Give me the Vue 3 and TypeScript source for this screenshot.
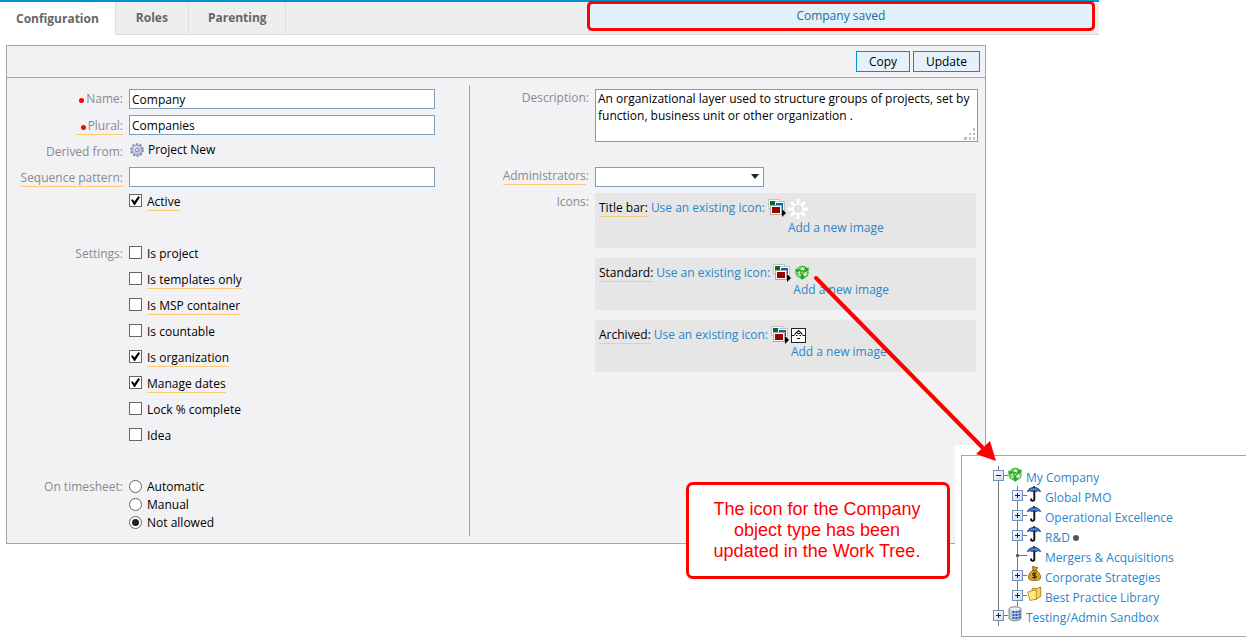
<script setup lang="ts">
import { ref } from 'vue'

interface Setting {
  id: string
  label: string
  hint: boolean
  checked: boolean
}

interface IconRow {
  id: 'title' | 'standard' | 'archived'
  label: string
}

interface TreeNode {
  label: string
  icon: 'company' | 'umbrella' | 'money' | 'folder' | 'database'
  level: 0 | 1
  toggle: 'plus' | 'minus' | 'leaf'
  marker?: boolean
}

const tabs = ['Configuration', 'Roles', 'Parenting']
const activeTab = ref('Configuration')

const name = ref('Company')
const plural = ref('Companies')
const sequence = ref('')
const active = ref(true)
const description = ref(
  'An organizational layer used to structure groups of projects, set by function, business unit or other organization .'
)
const administrator = ref('')

const settings = ref<Setting[]>([
  { id: 'project', label: 'Is project', hint: false, checked: false },
  { id: 'templates', label: 'Is templates only', hint: true, checked: false },
  { id: 'msp', label: 'Is MSP container', hint: true, checked: false },
  { id: 'countable', label: 'Is countable', hint: false, checked: false },
  { id: 'organization', label: 'Is organization', hint: true, checked: true },
  { id: 'dates', label: 'Manage dates', hint: true, checked: true },
  { id: 'lock', label: 'Lock % complete', hint: false, checked: false },
  { id: 'idea', label: 'Idea', hint: false, checked: false }
])

const timesheetModes = ['Automatic', 'Manual', 'Not allowed']
const timesheet = ref('Not allowed')

const iconRows: IconRow[] = [
  { id: 'title', label: 'Title bar:' },
  { id: 'standard', label: 'Standard:' },
  { id: 'archived', label: 'Archived:' }
]

const tree: TreeNode[] = [
  { label: 'My Company', icon: 'company', level: 0, toggle: 'minus' },
  { label: 'Global PMO', icon: 'umbrella', level: 1, toggle: 'plus' },
  { label: 'Operational Excellence', icon: 'umbrella', level: 1, toggle: 'plus' },
  { label: 'R&D', icon: 'umbrella', level: 1, toggle: 'plus', marker: true },
  { label: 'Mergers & Acquisitions', icon: 'umbrella', level: 1, toggle: 'leaf' },
  { label: 'Corporate Strategies', icon: 'money', level: 1, toggle: 'plus' },
  { label: 'Best Practice Library', icon: 'folder', level: 1, toggle: 'plus' },
  { label: 'Testing/Admin Sandbox', icon: 'database', level: 0, toggle: 'plus' }
]
</script>

<template>
  <div class="page">
    <header class="tabbar">
      <nav class="tabs">
        <button
          v-for="tab in tabs"
          :key="tab"
          type="button"
          class="tab"
          :class="{ current: tab === activeTab }"
          @click="activeTab = tab"
        >{{ tab }}</button>
      </nav>
      <div class="status" role="status">Company saved</div>
    </header>

    <main class="panel">
      <div class="toolbar">
        <button type="button" class="action">Copy</button>
        <button type="button" class="action wide">Update</button>
      </div>

      <form class="columns" @submit.prevent>
        <section class="left">
          <div class="row">
            <label class="caption" for="name"><i class="dot"></i>Name:</label>
            <input id="name" v-model="name" class="text" type="text" />
          </div>
          <div class="row">
            <label class="caption low" for="plural"><span class="hint"><i class="dot"></i>Plural:</span></label>
            <input id="plural" v-model="plural" class="text" type="text" />
          </div>
          <div class="row">
            <span class="caption low">Derived from:</span>
            <span class="derived">
              <svg width="14" height="14" viewBox="0 0 14 14">
                <circle cx="7" cy="7" r="5.8" fill="none" stroke="#7f7fab" stroke-width="2" stroke-dasharray="2 1.64" />
                <circle cx="7" cy="7" r="5.2" fill="#c0c0e0" stroke="#8d8db8" stroke-width="0.8" />
                <circle cx="6" cy="5.6" r="2.8" fill="#d6d6ee" />
                <circle cx="7" cy="7" r="1.6" fill="#f2f2f8" stroke="#8585b4" stroke-width="1" />
              </svg>
              Project New
            </span>
          </div>
          <div class="row">
            <label class="caption low" for="sequence"><span class="hint">Sequence pattern:</span></label>
            <input id="sequence" v-model="sequence" class="text" type="text" />
          </div>
          <div class="row check">
            <span class="caption"></span>
            <input id="active" v-model="active" class="box" type="checkbox" />
            <label for="active"><span class="hint">Active</span></label>
          </div>

          <div class="group settings">
            <div v-for="(item, index) in settings" :key="item.id" class="row check">
              <span class="caption">{{ index === 0 ? 'Settings:' : '' }}</span>
              <input :id="item.id" v-model="item.checked" class="box" type="checkbox" />
              <label :for="item.id"><span :class="{ hint: item.hint }">{{ item.label }}</span></label>
            </div>
          </div>

          <div class="group modes">
            <div v-for="(mode, index) in timesheetModes" :key="mode" class="row short">
              <span class="caption">{{ index === 0 ? 'On timesheet:' : '' }}</span>
              <input :id="'mode-' + index" v-model="timesheet" class="radio" type="radio" name="timesheet" :value="mode" />
              <label :for="'mode-' + index">{{ mode }}</label>
            </div>
          </div>
        </section>

        <section class="right">
          <div class="field">
            <label class="caption" for="description">Description:</label>
            <div class="area">
              <textarea id="description" v-model="description"></textarea>
              <svg class="grip" width="12" height="12" viewBox="0 0 12 12" fill="#c0c0c0">
                <path d="M9 0h2v3h-2zM9 5h2v2h-2zM5 5h2v2h-2zM9 9h2v3h-2zM5 9h2v3h-2zM0 9h3v3h-3z" />
              </svg>
            </div>
          </div>
          <div class="field admins">
            <label class="caption" for="admins"><span class="hint">Administrators</span>:</label>
            <div class="picklist">
              <select id="admins" v-model="administrator">
                <option value=""></option>
              </select>
            </div>
          </div>
          <div class="field">
            <span class="caption">Icons:</span>
            <div class="cards">
              <div v-for="row in iconRows" :key="row.id" class="card">
                <span class="cardname"><span class="hint">{{ row.label }}</span></span>
                <a href="#" class="use">Use an existing icon:</a>
                <svg class="picker" width="18" height="19" viewBox="0 0 18 19">
                  <path d="M0 0h12v10h-12z" fill="#c2c2c2" />
                  <path d="M1 1h10v8h-10z" fill="#fff" />
                  <path d="M2 2h8v6h-8z" fill="#006a35" />
                  <path d="M7 2h10v10h-10z" fill="#c2c2c2" />
                  <path d="M7 3h9v8h-9z" fill="#fff" />
                  <path d="M8 4h7v6h-7z" fill="#0067a6" />
                  <path d="M2 6h12v10h-12z" fill="#aaa" />
                  <path d="M3 7h10v8h-10z" fill="#fff" />
                  <path d="M4 8h8v6h-8z" fill="#9b0000" />
                  <path d="M14 10l4 4l-4 4z" fill="#000" />
                </svg>
                <div class="chosen">
                  <svg v-if="row.id === 'title'" width="20" height="20" viewBox="0 0 20 20">
                    <g stroke="#fff" stroke-width="2.800">
                      <path d="M10 0v5M10 15v5M0 10h5M15 10h5M3 3l3.500 3.500M13.500 13.500l3.500 3.500M17 3l-3.500 3.500M6.500 13.500l-3.500 3.500" />
                    </g>
                    <circle cx="10" cy="10" r="4.300" fill="#e6e6e6" stroke="#fff" stroke-width="2" />
                    <circle cx="10" cy="10" r="3.500" fill="none" stroke="#ccc" stroke-width="0.8" />
                  </svg>
                  <svg v-else-if="row.id === 'standard'" class="small" width="14" height="15" viewBox="0 0 14 15">
                    <path d="M0.300 4l2-0.500c2-3.500 7.500-3.500 9.500-0.500l2-0.500l-0.500 3.500c1 3-0.500 6-3.500 7l-2.800 1.700l-2-1.700c-3.500-0.500-5-4-4.500-6.500z" fill="#27a52c" />
                    <path d="M2.500 4.500c2-3 6-3 7.500-0.500M12 6c0.500 3-1 5-3 5.500M5.500 12c-2.500-0.500-4-2.500-3.500-5" fill="none" stroke="#7be04f" stroke-width="1.600" />
                    <path d="M3.500 8.500l1.500-2M5.800 5l1.700-1.800l1.500 2.200M10 7l1 2.500h-2.800M6 9.800h-2.500" fill="none" stroke="#fff" stroke-width="1.300" />
                    <path d="M5.500 8.500l2-2.500l1.500 2.500z" fill="#8fe070" />
                  </svg>
                  <svg v-else class="boxed" width="15" height="15" viewBox="0 0 15 15">
                    <rect x="0.5" y="0.5" width="14" height="14" fill="#fff" stroke="#222" />
                    <path d="M1 7.500h2.500M11.500 7.500h2.500M3.500 6.500l4-4l4 4M6 5.500h3M5 7.500h1.500M8.500 7.500h1.500M6 10.500h3" fill="none" stroke="#111" stroke-width="1.100" />
                  </svg>
                  <a href="#">Add a new image</a>
                </div>
              </div>
            </div>
          </div>
        </section>
      </form>
    </main>

    <aside class="treewrap">
      <ul class="tree">
        <li v-for="node in tree" :key="node.label" class="node" :class="{ child: node.level === 1 }">
          <span v-if="node.toggle === 'leaf'" class="leaf"></span>
          <button v-else type="button" class="toggle" :class="node.toggle" :aria-label="'Toggle ' + node.label"></button>
          <svg class="glyph" width="15" height="16" viewBox="0 0 15 16">
            <g v-if="node.icon === 'company'">
              <path d="M0.300 5l2-0.500c2-3.500 7.500-3.500 9.500-0.500l2-0.500l-0.500 3.500c1 3-0.500 6-3.500 7l-2.800 1.700l-2-1.700c-3.500-0.500-5-4-4.500-6.500z" fill="#27a52c" />
              <path d="M2.500 5.500c2-3 6-3 7.500-0.500M12 7c0.500 3-1 5-3 5.500M5.500 13c-2.500-0.500-4-2.500-3.500-5" fill="none" stroke="#7be04f" stroke-width="1.600" />
              <path d="M3.500 9.500l1.500-2M5.800 6l1.700-1.800l1.500 2.200M10 8l1 2.500h-2.800M6 10.800h-2.500" fill="none" stroke="#fff" stroke-width="1.300" />
              <path d="M5.500 9.500l2-2.500l1.500 2.500z" fill="#8fe070" />
            </g>
            <g v-else-if="node.icon === 'umbrella'">
              <path d="M0.500 5.500c1-2.500 3-4 6.500-4s5.500 1.500 6.500 4l-2.200-0.800l-2.200 0.800l-2.100-0.800l-2.100 0.800l-2.200-0.800z" fill="#4b83dc" stroke="#182b57" stroke-width="0.9" />
              <path d="M7 0v1.500" stroke="#111" stroke-width="1.500" />
              <path d="M7.300 5v8.200c0 2-3.300 2-3.300 0v-0.700" fill="none" stroke="#111" stroke-width="1.900" />
            </g>
            <g v-else-if="node.icon === 'money'">
              <path d="M5.500 0.500l5 1l-1.500 3c3 1.500 4.500 4 4.500 6.500c0 2.500-1.500 3.500-6 3.500s-6-1-6-3.500c0-3 2-5.500 4.500-6.500z" fill="#d9a521" stroke="#85600e" stroke-width="0.9" />
              <path d="M5.500 4.500l4 0.300" stroke="#76520b" stroke-width="1.200" />
              <path d="M9.500 7.500c-1.500-0.900-4-0.700-3.800 0.900s3.600 0.800 3.600 2.300s-2.500 1.600-4 0.600M7.500 6.500v6.300" fill="none" stroke="#302204" stroke-width="1.100" />
            </g>
            <g v-else-if="node.icon === 'folder'">
              <path d="M5 2.500l3-0.500l1 1l4.500-2l0.500 9l-5 3.500l-4-2z" fill="#f2cf55" stroke="#aa7d13" stroke-width="0.9" />
              <path d="M0.800 6l5.500-1.500l3-0.500v9l-6.300 1.500z" fill="#ffe988" stroke="#b88b1d" stroke-width="0.9" />
            </g>
            <g v-else>
              <path d="M1 3c0-3 12-3 12 0v9.500c-1.500 3-10.500 3-12 0z" fill="#c9ccd1" stroke="#777b82" stroke-width="0.9" />
              <ellipse cx="7" cy="3" rx="5.200" ry="1.500" fill="#eceef0" />
              <path d="M5.500 5v9M8.500 5v9M11.500 4.500v8.500" stroke="#1f5fc4" stroke-width="2" stroke-dasharray="2 1" />
            </g>
          </svg>
          <a href="#">{{ node.label }}</a>
          <i v-if="node.marker" class="marker"></i>
        </li>
      </ul>
    </aside>

    <p class="callout">The icon for the Company object type has been updated in the Work Tree.</p>

    <svg class="arrow" width="184" height="188" viewBox="0 0 184 188">
      <path d="M3 4l166 169" stroke="#f00" stroke-width="4" stroke-linecap="round" />
      <path d="M183 187l-20-7l14-13z" fill="#f00" />
    </svg>
  </div>
</template>

<style>
body {
  margin: 0;
  background: #fff;
}
</style>

<style scoped>
.page {
  position: relative;
  min-height: 100vh;
  overflow: hidden;
  font: 12px/18px "Open Sans", "Noto Sans", sans-serif;
  color: #000;
}

.page * {
  box-sizing: border-box;
}

button,
input,
select,
textarea {
  margin: 0;
  font: inherit;
  color: inherit;
}

a {
  color: #2a86cb;
  text-decoration: none;
}

svg {
  display: block;
  flex: none;
}

/* Tabs and status */
.tabbar {
  display: flex;
  height: 35px;
  margin-right: 147px;
  border-top: 2px solid #0090d0;
  background: #eee;
  box-shadow: inset 0 -1px #dedede;
}

.tabs {
  display: flex;
}

.tab {
  height: 31px;
  padding: 0 20px;
  border: 0;
  border-right: 1px solid #dedede;
  background: none;
  font-weight: 700;
  color: #666;
}

.tab:last-child {
  padding: 0 18px 0 19px;
}

.tab.current {
  height: 33px;
  padding: 0 16px;
  background: #fff;
}

.status {
  flex: 1;
  height: 30px;
  margin: -1px 4px 0 301px;
  border: 3px solid #f00;
  border-radius: 5px;
  background: #e2f0f9;
  color: #1a6fa3;
  line-height: 24px;
  text-align: center;
}

/* Panel */
.panel {
  margin: 10px 260px 0 6px;
  border: 1px solid #a3a5a8;
  background: #f2f2f5;
}

.toolbar {
  display: flex;
  justify-content: flex-end;
  gap: 3px;
  padding: 5px 5px 5px 0;
  border-bottom: 1px solid #a3a5a8;
}

.action {
  width: 54px;
  height: 21px;
  padding: 0;
  border: 1px solid #0090d0;
  background: #e4f1fb;
}

.action.wide {
  width: 67px;
}

.columns {
  display: grid;
  grid-template-columns: 463fr 515fr;
  padding: 7px 0;
}

.left {
  padding: 1px 34px 4px 0;
  border-right: 1px solid #a3a5a8;
}

.row {
  display: flex;
  align-items: center;
  height: 26px;
}

.row.check {
  padding-bottom: 2px;
}

.row.short {
  height: 18px;
}

.caption {
  flex: none;
  width: 116px;
  margin-right: 6px;
  text-align: right;
  color: #8a8a8d;
}

.caption.low {
  padding-top: 2px;
}

.hint {
  border-bottom: 1px solid #fccb73;
}

.dot {
  display: inline-block;
  width: 5px;
  height: 5px;
  margin-right: 2px;
  border-radius: 50%;
  background: #f00;
}

.hint .dot {
  margin-left: 5px;
}

.text {
  flex: 1;
  min-width: 0;
  height: 20px;
  padding: 0 2px;
  border: 1px solid #7f9db9;
  border-radius: 0;
  background: #fff;
}

.derived {
  display: flex;
  align-items: center;
  gap: 4px;
  padding: 0 0 2px 1px;
}

.box,
.radio {
  flex: none;
  display: grid;
  place-items: center;
  width: 13px;
  height: 13px;
  margin: 0 5px 3px 0;
  border: 1px solid #666;
  background: #fff;
  appearance: none;
}

.box:checked::after {
  content: "";
  width: 9px;
  height: 9px;
  background: #000;
  clip-path: polygon(0 45%, 18% 35%, 38% 62%, 82% 0, 100% 14%, 44% 100%, 34% 100%);
}

.radio {
  margin-bottom: 2px;
  border-radius: 50%;
}

.radio:checked::after {
  content: "";
  width: 7px;
  height: 7px;
  border-radius: 50%;
  background: #222;
}

.settings {
  padding-top: 26px;
}

.modes {
  padding-top: 28px;
}

.area {
  position: relative;
  flex: 1;
  margin-right: 7px;
}

.area textarea {
  display: block;
  width: 100%;
  height: 53px;
  padding: 0 2px;
  border: 1px solid #7f9db9;
  border-radius: 0;
  background: #fff;
  line-height: 17px;
  resize: none;
}

.grip {
  position: absolute;
  right: 2px;
  bottom: 2px;
}

.field {
  display: flex;
}

.right {
  padding-top: 4px;
}

.right .caption {
  width: 119px;
}

.admins {
  margin: 25px 0 6px;
}

.picklist {
  position: relative;
  width: 169px;
}

.picklist select {
  display: block;
  width: 100%;
  height: 20px;
  padding: 0 20px 0 3px;
  border: 1px solid #7f9db9;
  border-radius: 0;
  background: #fff;
  appearance: none;
}

.picklist::after {
  content: "";
  position: absolute;
  top: 7px;
  right: 5px;
  border: 4px solid transparent;
  border-top: 5px solid #222;
  border-bottom: 0;
  pointer-events: none;
}

.cards {
  flex: 1;
  display: grid;
  gap: 10px;
  margin-right: 9px;
}

.card {
  display: flex;
  align-items: flex-start;
  padding: 6px 4px 11px;
  background: #e6e6e6;
}

.use {
  margin: 0 3px;
}

.picker {
  margin-right: 2px;
}

.chosen .small {
  margin: 1px 0 1px 2px;
}

.chosen .boxed {
  margin: 2px 0 0;
}

/* Work tree */
.treewrap {
  position: absolute;
  top: 445px;
  right: 0;
  width: 291px;
  padding: 10px 0 8px 6px;
  background: #fff;
}

.tree {
  margin: 0;
  padding: 10px 0 10px 31px;
  border: 1px solid #a3a5a8;
  border-right: 0;
  list-style: none;
}

.node {
  display: flex;
  align-items: center;
  height: 20px;
  background:
    linear-gradient(#777, #777) 5px 9px / 10px 1px no-repeat,
    linear-gradient(#777, #777) 5px 0 / 1px 100% no-repeat;
}

.node.child {
  padding-left: 19px;
  background:
    linear-gradient(#777, #777) 24px 9px / 10px 1px no-repeat,
    linear-gradient(#777, #777) 5px 0 / 1px 100% no-repeat,
    linear-gradient(#777, #777) 24px 0 / 1px 100% no-repeat;
}

.toggle {
  flex: none;
  width: 11px;
  height: 11px;
  margin-bottom: 1px;
  padding: 0;
  border: 1px solid #7391c4;
  background:
    linear-gradient(#222, #222) 2px 4px / 5px 1px no-repeat,
    linear-gradient(135deg, #fff, #cfd8ea);
}

.toggle.plus {
  background:
    linear-gradient(#222, #222) 2px 4px / 5px 1px no-repeat,
    linear-gradient(#222, #222) 4px 2px / 1px 5px no-repeat,
    linear-gradient(135deg, #fff, #cfd8ea);
}

.leaf {
  width: 3px;
  height: 3px;
  margin: 0 4px 1px;
  background: #666;
}

.glyph {
  margin: 0 3px 4px 4px;
}

.node a {
  padding-top: 4px;
}

.marker {
  width: 6px;
  height: 6px;
  margin: 4px 0 0 3px;
  border-radius: 50%;
  background: #555;
}

/* Annotations */
.callout {
  position: absolute;
  top: 482px;
  right: 296px;
  width: 264px;
  margin: 0;
  padding: 14px 22px 14px 20px;
  border: 3px solid #f00;
  border-radius: 7px;
  background: #fff;
  font: 18px/21px "Liberation Sans", Arial, sans-serif;
  color: #f00;
  text-align: center;
}

.arrow {
  position: absolute;
  top: 274px;
  right: 249px;
  pointer-events: none;
}
</style>
